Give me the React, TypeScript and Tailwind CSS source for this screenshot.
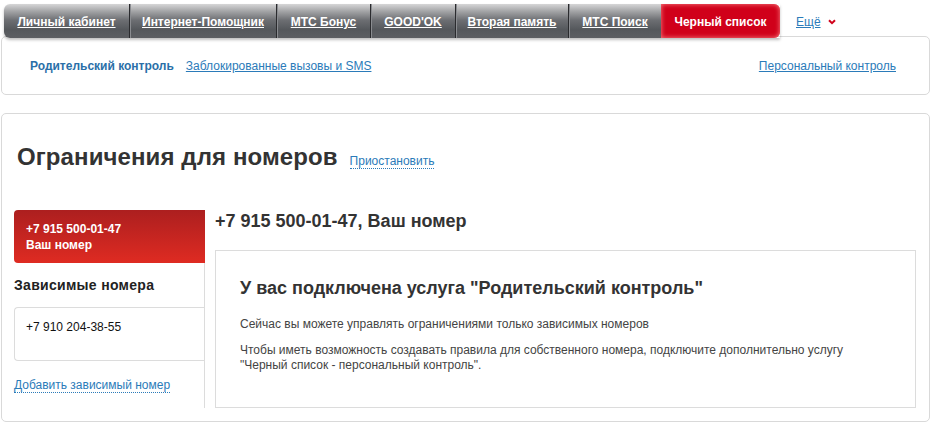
import React from 'react';

const tabs = [
  { label: 'Личный кабинет', w: 'w-[125px]' },
  { label: 'Интернет-Помощник', w: 'w-[147px]' },
  { label: 'МТС Бонус', w: 'w-[94px]' },
  { label: "GOOD'OK", w: 'w-[85px]' },
  { label: 'Вторая память', w: 'w-[113px]' },
  { label: 'МТС Поиск', w: 'w-[93px]' },
];

export default function App() {
  return (
    <div className="w-[935px] h-[428px] bg-white font-['Liberation_Sans',Arial,sans-serif] text-[12px] text-[#333] overflow-hidden">
      {/* Tab bar */}
      <div className="relative z-10 flex items-center pl-[4px] pt-[4px]">
        <div className="flex h-[34px] rounded-l-[6px] overflow-hidden shadow-[0_2px_3px_rgba(0,0,0,0.25)]">
          {tabs.map((t, i) => (
            <div
              key={t.label}
              className={`${t.w} flex items-center justify-center bg-[linear-gradient(to_bottom,#d6d6d7_0%,#a2a3a5_22%,#6c6e72_48%,#55585c_75%,#5d5f63_100%)] ${
                i > 0 ? 'border-l border-l-[#2a2b2e] shadow-[inset_1px_0_0_#8a8c90]' : ''
              }`}
            >
              <a className="text-white font-bold underline text-[12px] leading-none pt-[2px]" href="#">
                {t.label}
              </a>
            </div>
          ))}
          <div className="w-[119px] flex items-center justify-center rounded-r-[6px] bg-[#d0001a] shadow-[inset_0_0_5px_rgba(255,150,150,0.9)]">
            <span className="text-white font-bold text-[12px] leading-none pt-[2px]">Черный список</span>
          </div>
        </div>
        <div className="flex items-center ml-[16px] gap-[7px] pt-[2px]">
          <a href="#" className="text-[#2b7bb9] underline text-[12px]">Ещё</a>
          <svg width="8" height="6" viewBox="0 0 8 6">
            <path d="M1 1.2 L4 4.2 L7 1.2" stroke="#d0021b" strokeWidth="2" fill="none" />
          </svg>
        </div>
      </div>

      {/* Sub navigation panel */}
      <div className="relative mx-[1px] w-[929px] -mt-[2px] h-[59px] border border-[#d9d9d9] rounded-[5px] flex items-center px-[28px]">
        <span className="font-bold text-[#2a6fa8]">Родительский контроль</span>
        <a href="#" className="ml-[12px] text-[#2b7bb9] underline">Заблокированные вызовы и SMS</a>
        <a href="#" className="ml-auto mr-[5px] text-[#2b7bb9] underline">Персональный контроль</a>
      </div>

      {/* Main panel */}
      <div className="mx-[1px] w-[929px] mt-[18px] h-[309px] border border-[#d9d9d9] rounded-[5px] pl-[12px] pr-[13px] pt-[28px]">
        <div className="flex items-baseline pl-[3px]">
          <h1 className="text-[24px] font-bold text-[#333] leading-[30px] tracking-[0.1px]">Ограничения для номеров</h1>
          <a href="#" className="ml-[12px] text-[#2b7bb9] border-b border-dotted border-[#2b7bb9] leading-[14px]">Приостановить</a>
        </div>

        <div className="flex mt-[38px] h-[198px]">
          {/* Left column */}
          <div className="w-[191px] border-r border-[#dcdcdc] flex flex-col">
            <div className="h-[53px] -mr-[1px] rounded-l-[4px] bg-[linear-gradient(to_bottom,#ac1f1f,#df2b22)] px-[12px] pt-[11px] text-white font-bold leading-[16px]">
              <div>+7 915 500-01-47</div>
              <div>Ваш номер</div>
            </div>
            <div className="mt-[14px] text-[14px] font-bold text-[#222] leading-[16px] tracking-[0.3px]">Зависимые номера</div>
            <div className="mt-[14px] h-[54px] border border-[#dcdcdc] border-r-0 rounded-l-[4px] px-[11px] pt-[10px] text-[#111]">
              +7 910 204-38-55
            </div>
            <div className="mt-[15px]">
              <a href="#" className="text-[#2b7bb9] border-b border-dotted border-[#2b7bb9] leading-[14px]">Добавить зависимый номер</a>
            </div>
          </div>

          {/* Right column */}
          <div className="flex-1 pl-[10px] flex flex-col">
            <div className="text-[18px] font-bold text-[#333] leading-[22px]">+7 915 500-01-47, Ваш номер</div>
            <div className="mt-[18px] flex-1 border border-[#dcdcdc] px-[24px] pt-[26px]">
              <div className="text-[18px] font-bold text-[#333] leading-[22px]">
                У вас подключена услуга "Родительский контроль"
              </div>
              <p className="mt-[17px] text-[#444] leading-[16px]">
                Сейчас вы можете управлять ограничениями только зависимых номеров
              </p>
              <p className="mt-[11px] text-[#444] leading-[15px]">
                Чтобы иметь возможность создавать правила для собственного номера, подключите дополнительно услугу
                <br />
                "Черный список - персональный контроль".
              </p>
            </div>
          </div>
        </div>
      </div>
    </div>
  );
}
